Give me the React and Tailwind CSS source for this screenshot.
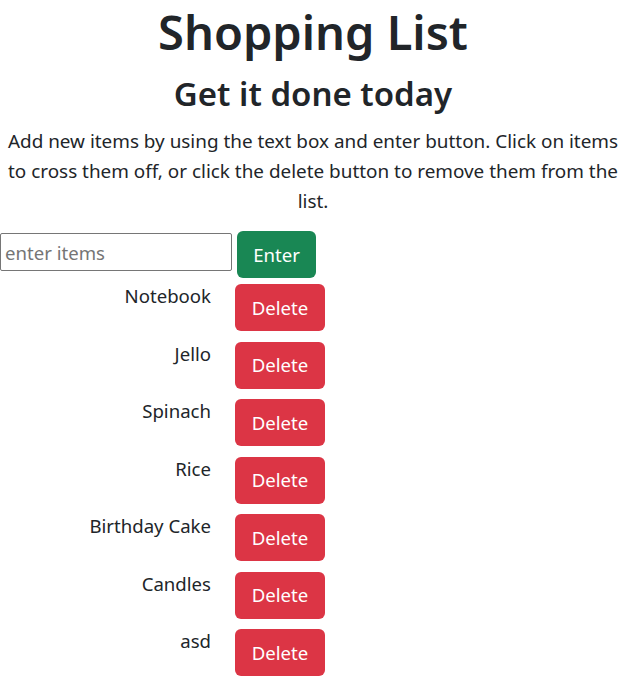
import React, { useState } from 'react';

const initialItems = ['Notebook', 'Jello', 'Spinach', 'Rice', 'Birthday Cake', 'Candles', 'asd'];

export default function App() {
  const [items, setItems] = useState(initialItems);
  const [text, setText] = useState('');
  const [done, setDone] = useState({});

  const addItem = () => {
    if (!text.trim()) return;
    setItems([...items, text.trim()]);
    setText('');
  };

  return (
    <div className="min-h-[691px] bg-white text-[#212529] font-['Noto_Sans',sans-serif]">
      <div className="pr-[14px] text-center">
        <h1 className="pt-[2px] text-[47px] font-semibold leading-[60px]">Shopping List</h1>
        <h2 className="mt-[8px] text-[33px] font-semibold leading-[48px]">Get it done today</h2>
        <p className="mt-[8px] text-[18.9px] leading-[30px]">
          Add new items by using the text box and enter button. Click on items
          <br />
          to cross them off, or click the delete button to remove them from the
          <br />
          list.
        </p>
      </div>

      <div className="mt-[15px] flex items-start">
        <input
          value={text}
          onChange={(e) => setText(e.target.value)}
          placeholder="enter items"
          className="mt-[2px] h-[38px] w-[232px] rounded-[2px] border border-[#767676] px-[4px] text-[18.6px] placeholder:text-[#757575] outline-none"
        />
        <button
          onClick={addItem}
          className="ml-[5px] h-[47px] w-[79px] rounded-[6px] bg-[#198754] text-[18.6px] text-white"
        >
          Enter
        </button>
      </div>

      <ul className="mt-[6px] flex flex-col gap-[10.5px]">
        {items.map((item, i) => (
          <li key={i} className="flex items-start">
            <span
              onClick={() => setDone({ ...done, [i]: !done[i] })}
              className={`-mt-[3px] w-[211px] cursor-pointer text-right text-[18.6px] leading-[30px] ${done[i] ? 'line-through' : ''}`}
            >
              {item}
            </span>
            <button
              onClick={() => setItems(items.filter((_, j) => j !== i))}
              className="ml-[24px] h-[47px] w-[90px] rounded-[6px] bg-[#dc3545] text-[18.6px] text-white"
            >
              Delete
            </button>
          </li>
        ))}
      </ul>
    </div>
  );
}
